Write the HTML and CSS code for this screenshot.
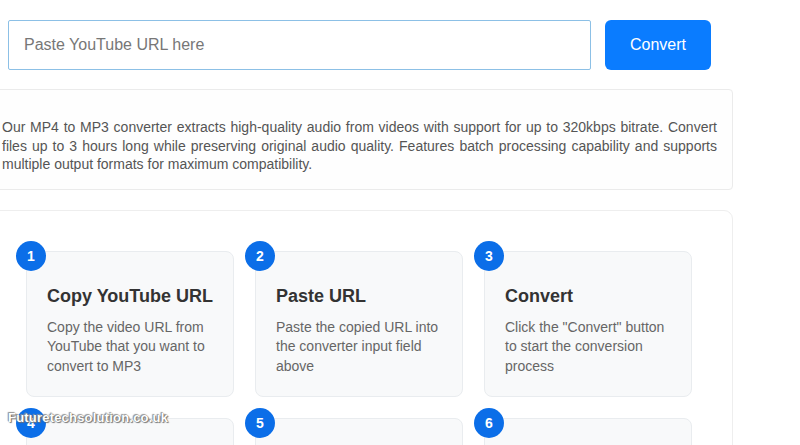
FILE: index.html
```html
<!DOCTYPE html>
<html lang="en">
<head>
<meta charset="utf-8">
<title>MP4 to MP3 Converter</title>
<link rel="stylesheet" href="styles.css">
</head>
<body>
<div class="search">
  <input class="url-input" type="text" placeholder="Paste YouTube URL here">
  <button class="convert-btn" type="button">Convert</button>
</div>
<div class="page">
  <div class="desc">
    <p>Our MP4 to MP3 converter extracts high-quality audio from videos with support for up to 320kbps bitrate. Convert files up to 3 hours long while preserving original audio quality. Features batch processing capability and supports multiple output formats for maximum compatibility.</p>
  </div>
  <div class="steps">
    <div class="step">
      <span class="badge">1</span>
      <h3>Copy YouTube URL</h3>
      <p>Copy the video URL from YouTube that you want to convert to MP3</p>
    </div>
    <div class="step">
      <span class="badge">2</span>
      <h3>Paste URL</h3>
      <p>Paste the copied URL into the converter input field above</p>
    </div>
    <div class="step">
      <span class="badge">3</span>
      <h3>Convert</h3>
      <p>Click the "Convert" button to start the conversion process</p>
    </div>
    <div class="step">
      <span class="badge">4</span>
      <h3>Choose Quality</h3>
      <p>Select the audio bitrate and output format you prefer</p>
    </div>
    <div class="step">
      <span class="badge">5</span>
      <h3>Download</h3>
      <p>Save the converted MP3 file to your device</p>
    </div>
    <div class="step">
      <span class="badge">6</span>
      <h3>Enjoy</h3>
      <p>Listen to your audio anywhere, on any device</p>
    </div>
  </div>
</div>
<div class="watermark">Futuretechsolution.co.uk</div>
</body>
</html>
```
FILE: styles.css
```css
* { box-sizing: border-box; }
html, body { margin: 0; padding: 0; background: #fff; overflow: hidden; }
body { font-family: "Liberation Sans", Arial, sans-serif; color: #333; }

.search {
  display: flex;
  gap: 14px;
  padding: 20px 0 0 8px;
}
.url-input {
  width: 583px;
  height: 50px;
  border: 1px solid #8cc0e6;
  border-radius: 2px;
  padding: 0 15px;
  font: 16px "Liberation Sans", Arial, sans-serif;
  color: #333;
  outline: none;
}
.url-input::placeholder { color: #777; }
.convert-btn {
  width: 106px;
  height: 50px;
  border: 0;
  border-radius: 6px;
  background: #0a7cff;
  color: #fff;
  font: 16px "Liberation Sans", Arial, sans-serif;
}

.page {
  width: 746px;
  margin-left: -13px;
}
.desc {
  margin-top: 19px;
  height: 101px;
  border: 1px solid #ebebeb;
  border-radius: 4px;
  background: #fefefe;
  padding: 28px 15px 15px 14px;
}
.desc p {
  margin: 0;
  font-size: 14px;
  line-height: 18.5px;
  color: #555;
  text-align: justify;
}

.steps {
  margin-top: 20px;
  border: 1px solid #eeeeee;
  border-radius: 9px;
  padding: 40px 40px 40px 38px;
  display: grid;
  grid-template-columns: repeat(3, 1fr);
  gap: 21px;
}
.step {
  position: relative;
  height: 146px;
  background: #f8f9fa;
  border: 1px solid #e9ecef;
  border-radius: 8px;
  padding: 34px 20px 20px;
}
.badge {
  position: absolute;
  top: -11px;
  left: -11px;
  width: 30px;
  height: 30px;
  border-radius: 50%;
  background: #0b6ee8;
  color: #fff;
  font-weight: bold;
  font-size: 14px;
  display: flex;
  align-items: center;
  justify-content: center;
}
.step h3 {
  margin: 0 0 10px;
  font-size: 18px;
  line-height: 21.6px;
  font-weight: bold;
  color: #333;
}
.step p {
  margin: 0;
  font-size: 14px;
  line-height: 19.6px;
  color: #666;
}

.watermark {
  position: absolute;
  left: 8px;
  top: 410px;
  font-size: 13px;
  font-weight: bold;
  letter-spacing: 0.2px;
  color: #fff;
  text-shadow: 0 0 1px #555, 1px 1px 1px #777, -1px -1px 1px #999;
}
```
